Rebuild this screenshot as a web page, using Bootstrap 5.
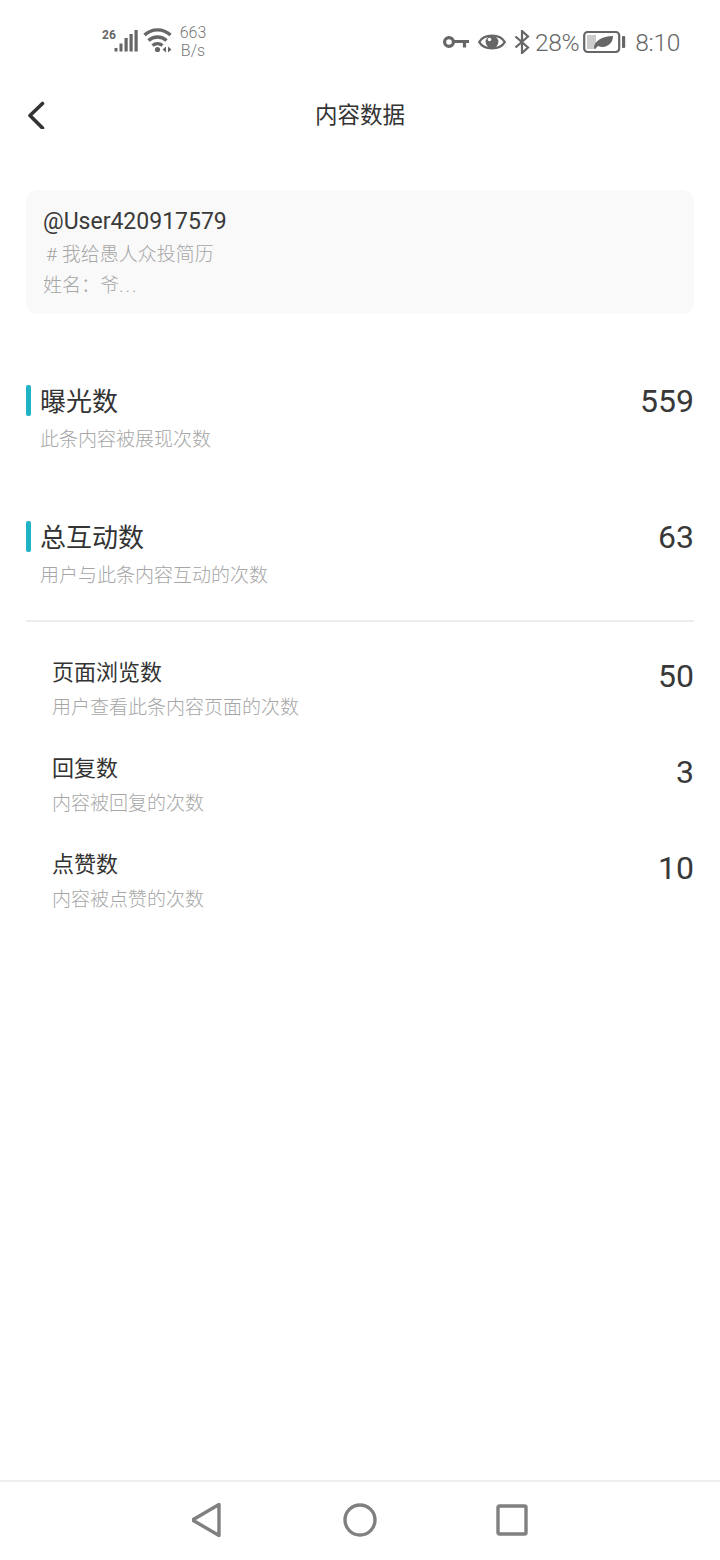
<!DOCTYPE html>
<html lang="zh">
<head>
    <meta charset="UTF-8">
    <meta name="viewport" content="width=device-width, initial-scale=1.0">
    <title>内容数据</title>
    <link href="https://cdn.jsdelivr.net/npm/bootstrap@5.3.0/dist/css/bootstrap.min.css" rel="stylesheet">
    <style>
        body {
            font-family: Roboto, "Noto Sans CJK SC", sans-serif;
            background: #fff;
            color: #333;
        }
        .phone-page {
            height: 1560px;
        }
        .status-strip {
            height: 80px;
            padding: 20px 40px 0 102px;
            color: #666;
        }
        .net-speed {
            font-size: 16px;
            line-height: 18px;
            margin: 4px 0 0 6px;
            width: 30px;
            text-align: center;
            color: #777;
            font-weight: 300;
        }
        .status-text {
            font-size: 24.5px;
            font-weight: 300;
            line-height: 44px;
            margin-top: 2px;
            color: #666;
            letter-spacing: -0.3px;
        }
        .status-pct {
            margin-left: 5px;
        }
        .status-clock {
            margin-left: 9px;
        }
        .status-right {
            height: 44px;
        }
        .top-header {
            height: 70px;
        }
        .back-btn {
            left: 26px;
            top: 21px;
        }
        .top-title {
            font-size: 22.5px;
            line-height: 71px;
            color: #333;
        }
        .post-box {
            margin: 40px 26px 0;
            height: 124px;
            background: #f9f9f9;
            border-radius: 12px;
            padding: 16px 17px 0;
        }
        .post-user {
            font-size: 23px;
            line-height: 32px;
            color: #3a3a3a;
            font-weight: 400;
        }
        .post-line {
            font-size: 19px;
            line-height: 31px;
            color: #a6a6a6;
            font-weight: 300;
            position: relative;
            top: 1px;
        }
        .post-tag {
            margin-left: 3px;
        }
        .post-more {
            letter-spacing: 2px;
        }
        .metric-main {
            height: 136px;
            padding: 0 26px;
        }
        .metric-first {
            margin-top: 71px;
        }
        .metric-bar {
            width: 5px;
            height: 31px;
            background: #1fb3c6;
            border-radius: 2px;
            margin-right: 9px;
        }
        .metric-name {
            font-size: 26px;
            line-height: 35px;
            color: #333;
        }
        .metric-desc {
            font-size: 19px;
            line-height: 26px;
            margin: 7px 0 0 14px;
            color: #a6a6a6;
            font-weight: 300;
        }
        .metric-num {
            font-size: 32px;
            line-height: 32px;
            color: #383838;
            font-weight: 400;
        }
        .metric-rule {
            height: 2px;
            margin: -37px 26px 0;
            background: #ececec;
        }
        .sub-list {
            padding: 36px 26px 0 52px;
        }
        .sub-item {
            height: 96px;
        }
        .sub-name {
            font-size: 22px;
            line-height: 30px;
            color: #333;
        }
        .sub-desc {
            font-size: 19px;
            line-height: 26px;
            margin-top: 7px;
            color: #a6a6a6;
            font-weight: 300;
        }
        .sub-num {
            line-height: 30px;
            margin-top: 3px;
        }
        .nav-strip {
            height: 80px;
            border-top: 2px solid #efefef;
            padding-bottom: 2px;
        }
        .nav-slot {
            width: 152px;
        }
    </style>
</head>
<body>
    <div class="phone-page d-flex flex-column">

        <!-- Status bar -->
        <div class="status-strip d-flex justify-content-between align-items-start flex-shrink-0">
            <div class="d-flex align-items-start">
                <svg width="70" height="36" viewBox="0 0 70 36" fill="#666">
                    <text x="0" y="19" font-family="Roboto" font-weight="700" font-size="12">26</text>
                    <rect x="12.5" y="28" width="3" height="3.5"/>
                    <rect x="17.5" y="23.5" width="3" height="8"/>
                    <rect x="22.5" y="18" width="3.2" height="13.5"/>
                    <rect x="27.5" y="14" width="3.2" height="17.5"/>
                    <rect x="32.5" y="10" width="3.2" height="21.5"/>
                    <path d="M42.5 15a19 19 0 0 1 26 0" fill="none" stroke="#666" stroke-width="3.4"/>
                    <path d="M46.5 20.5a13.5 13.5 0 0 1 18 0" fill="none" stroke="#666" stroke-width="3.4"/>
                    <path d="M50.5 25.5a8 8 0 0 1 10 0" fill="none" stroke="#666" stroke-width="3.4"/>
                    <circle cx="55.5" cy="29.5" r="2.6"/>
                    <path d="M60.5 29.5l3.5-3v6zM66 26.5l3.5 3-3.5 3z"/>
                </svg>
                <div class="net-speed">663<br>B/s</div>
            </div>
            <div class="status-right d-flex align-items-center">
                <svg width="27" height="16" viewBox="0 0 27 16" fill="none" stroke="#666" stroke-width="3.2">
                    <circle cx="6" cy="8" r="4.4"/>
                    <path d="M10 7.5h16M21.5 7.5v6"/>
                </svg>
                <svg class="ms-2" width="28" height="20" viewBox="0 0 28 20">
                    <path d="M1.2 10C6 1.5 22 1.5 26.8 10C22 18.5 6 18.5 1.2 10Z" fill="none" stroke="#666" stroke-width="2.4"/>
                    <circle cx="14" cy="10" r="6.4" fill="#666"/>
                    <circle cx="11.5" cy="7.5" r="1.8" fill="#fff"/>
                </svg>
                <svg class="ms-2" width="16" height="24" viewBox="0 0 16 24" fill="none" stroke="#666" stroke-width="2.2">
                    <path d="M1.5 6.5L14 17.5L8 23V1L14 6.5L1.5 17.5"/>
                </svg>
                <span class="status-text status-pct">28%</span>
                <svg class="ms-1" width="43" height="24" viewBox="0 0 43 24">
                    <rect x="1.2" y="2" width="35" height="20" rx="3.5" fill="none" stroke="#666" stroke-width="2.2"/>
                    <rect x="4" y="5" width="9" height="14" fill="#ccc"/>
                    <path d="M11 18C11 11 19 6 30 6C30 14 23 19 15 16L12 19Z" fill="#666"/>
                    <rect x="39" y="6" width="3.2" height="12" rx="1" fill="#666"/>
                </svg>
                <span class="status-text status-clock">8:10</span>
            </div>
        </div>

        <!-- Header -->
        <div class="top-header position-relative text-center flex-shrink-0">
            <svg class="back-btn position-absolute" width="22" height="28" viewBox="0 0 22 28" fill="none" stroke="#333" stroke-width="3.6" stroke-linecap="round" stroke-linejoin="round">
                <path d="M16.5 2.5L4 14.5L16.5 27"/>
            </svg>
            <div class="top-title">内容数据</div>
        </div>

        <!-- Post preview -->
        <div class="post-box flex-shrink-0">
            <div class="post-user">@User420917579</div>
            <div class="post-line"><span class="post-tag"># 我给愚人众投简历</span></div>
            <div class="post-line">姓名：爷<span class="post-more">...</span></div>
        </div>

        <!-- Main metrics -->
        <div class="metric-main metric-first d-flex justify-content-between flex-shrink-0">
            <div>
                <div class="d-flex">
                    <div class="metric-bar"></div>
                    <div class="metric-name">曝光数</div>
                </div>
                <div class="metric-desc">此条内容被展现次数</div>
            </div>
            <div class="metric-num">559</div>
        </div>
        <div class="metric-main d-flex justify-content-between flex-shrink-0">
            <div>
                <div class="d-flex">
                    <div class="metric-bar"></div>
                    <div class="metric-name">总互动数</div>
                </div>
                <div class="metric-desc">用户与此条内容互动的次数</div>
            </div>
            <div class="metric-num">63</div>
        </div>
        <div class="metric-rule flex-shrink-0"></div>

        <!-- Sub metrics -->
        <div class="sub-list flex-grow-1">
            <div class="sub-item d-flex justify-content-between">
                <div>
                    <div class="sub-name">页面浏览数</div>
                    <div class="sub-desc">用户查看此条内容页面的次数</div>
                </div>
                <div class="metric-num sub-num">50</div>
            </div>
            <div class="sub-item d-flex justify-content-between">
                <div>
                    <div class="sub-name">回复数</div>
                    <div class="sub-desc">内容被回复的次数</div>
                </div>
                <div class="metric-num sub-num">3</div>
            </div>
            <div class="sub-item d-flex justify-content-between">
                <div>
                    <div class="sub-name">点赞数</div>
                    <div class="sub-desc">内容被点赞的次数</div>
                </div>
                <div class="metric-num sub-num">10</div>
            </div>
        </div>

        <!-- Navigation bar -->
        <div class="nav-strip d-flex justify-content-center align-items-center flex-shrink-0">
            <div class="nav-slot d-flex justify-content-center">
                <svg width="32" height="36" viewBox="2 0 32 36" fill="none" stroke="#808080" stroke-width="3.4" stroke-linejoin="round">
                    <path d="M2.5 18L29 2.5V33.5Z"/>
                </svg>
            </div>
            <div class="nav-slot d-flex justify-content-center">
                <svg width="34" height="34" viewBox="0 0 34 34" fill="none" stroke="#808080" stroke-width="3.4">
                    <circle cx="17" cy="17" r="15"/>
                </svg>
            </div>
            <div class="nav-slot d-flex justify-content-center">
                <svg width="32" height="32" viewBox="0 0 32 32" fill="none" stroke="#808080" stroke-width="3.4" stroke-linejoin="round">
                    <rect x="2" y="2" width="28" height="28" rx="1.5"/>
                </svg>
            </div>
        </div>
    </div>

    <script src="https://cdn.jsdelivr.net/npm/bootstrap@5.3.0/dist/js/bootstrap.bundle.min.js"></script>
</body>
</html>
